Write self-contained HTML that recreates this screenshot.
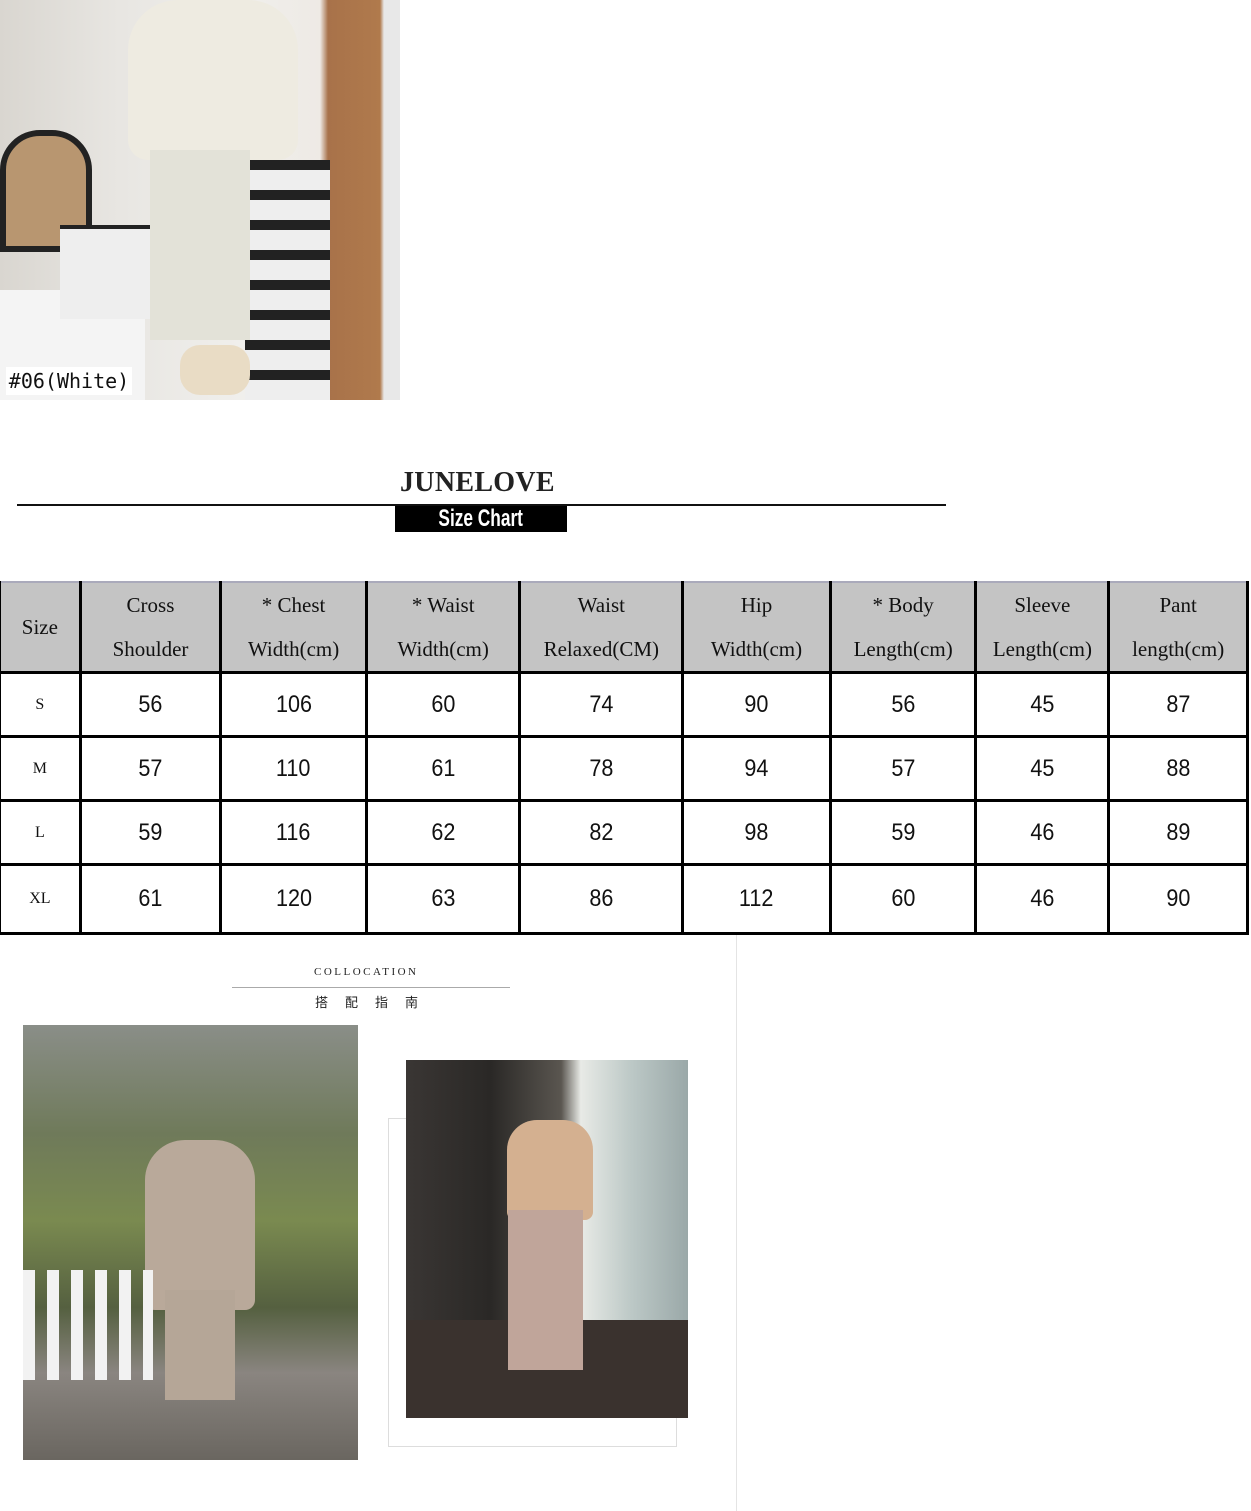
<!DOCTYPE html>
<html><head><meta charset="utf-8"><style>
body{margin:0;width:1251px;height:1511px;background:#fff;position:relative;overflow:hidden;font-family:"Liberation Serif",serif}
.a{position:absolute}
table{border-collapse:collapse;position:absolute;left:-2px;top:581px;table-layout:fixed}
td{border:3px solid #000;text-align:center;padding:0}
tr.h td{background:#c4c4c4;font-size:21px;line-height:44px;color:#111;height:86px;border-top:2px solid #aab}
tr.r td{font-family:"Liberation Sans",sans-serif;font-size:24px;height:61px;color:#111}
tr.r td:first-child{font-family:"Liberation Serif",serif;font-size:16px}
.n{display:inline-block;transform:scaleX(0.9)}
</style></head><body>
<div class="a" style="left:0;top:0;width:400px;height:400px;background:linear-gradient(90deg,#d9d6d0 0,#e8e6e2 30%,#f0efec 60%,#eeeae5 80%,#a8724a 82%,#b07a4c 95%,#e8e8e8 96%)"></div>
<div class="a" style="left:0;top:130px;width:80px;height:110px;background:#b89670;border:6px solid #222;border-radius:40px 40px 0 0"></div>
<div class="a" style="left:0;top:290px;width:145px;height:110px;background:#f4f4f4"></div>
<div class="a" style="left:60px;top:225px;width:110px;height:90px;background:#eee;border-top:4px solid #222"></div>
<div class="a" style="left:245px;top:160px;width:85px;height:240px;background:repeating-linear-gradient(180deg,#222 0 10px,#eee 10px 30px)"></div>
<div class="a" style="left:128px;top:0;width:170px;height:160px;background:#eeebe1;border-radius:50px 50px 20px 20px"></div>
<div class="a" style="left:150px;top:150px;width:100px;height:190px;background:#e3e2d8"></div>
<div class="a" style="left:180px;top:345px;width:70px;height:50px;background:#e9dcc5;border-radius:20px"></div>
<div class="a" style="left:6px;top:367px;width:126px;height:28px;background:#fff;font-family:'DejaVu Sans Mono',monospace;font-size:20px;line-height:28px;text-align:center;color:#111">#06(White)</div>
<div class="a" style="left:400px;top:467px;font-size:28px;font-weight:bold;letter-spacing:0.3px;color:#222">JUNELOVE</div>
<div class="a" style="left:17px;top:504px;width:929px;height:2px;background:#111"></div>
<div class="a" style="left:395px;top:506px;width:172px;height:26px;background:#000;color:#fff;font-family:'Liberation Sans',sans-serif;font-weight:bold;font-size:24px;line-height:26px;text-align:center"><span style="display:inline-block;transform:scaleX(0.72)">Size Chart</span></div>
<table>
<colgroup><col style="width:81px"><col style="width:141px"><col style="width:146px"><col style="width:154px"><col style="width:163px"><col style="width:148px"><col style="width:146px"><col style="width:133px"><col style="width:139px"></colgroup>
<tr class="h"><td>Size</td><td>Cross<br>Shoulder</td><td>* Chest<br>Width(cm)</td><td>* Waist<br>Width(cm)</td><td>Waist<br>Relaxed(CM)</td><td>Hip<br>Width(cm)</td><td>* Body<br>Length(cm)</td><td>Sleeve<br>Length(cm)</td><td>Pant<br>length(cm)</td></tr>
<tr class="r"><td>S</td><td><span class="n">56</span></td><td><span class="n">106</span></td><td><span class="n">60</span></td><td><span class="n">74</span></td><td><span class="n">90</span></td><td><span class="n">56</span></td><td><span class="n">45</span></td><td><span class="n">87</span></td></tr>
<tr class="r"><td>M</td><td><span class="n">57</span></td><td><span class="n">110</span></td><td><span class="n">61</span></td><td><span class="n">78</span></td><td><span class="n">94</span></td><td><span class="n">57</span></td><td><span class="n">45</span></td><td><span class="n">88</span></td></tr>
<tr class="r"><td>L</td><td><span class="n">59</span></td><td><span class="n">116</span></td><td><span class="n">62</span></td><td><span class="n">82</span></td><td><span class="n">98</span></td><td><span class="n">59</span></td><td><span class="n">46</span></td><td><span class="n">89</span></td></tr>
<tr class="r"><td style="height:66px">XL</td><td><span class="n">61</span></td><td><span class="n">120</span></td><td><span class="n">63</span></td><td><span class="n">86</span></td><td><span class="n">112</span></td><td><span class="n">60</span></td><td><span class="n">46</span></td><td><span class="n">90</span></td></tr>
</table>
<div class="a" style="left:736px;top:935px;width:1px;height:576px;background:#e4e4e4"></div>
<div class="a" style="left:314px;top:966px;font-size:11px;letter-spacing:2.5px;color:#222">COLLOCATION</div>
<div class="a" style="left:232px;top:987px;width:278px;height:1px;background:#aaa"></div>
<div class="a" style="left:315px;top:992px;font-family:'Liberation Sans','Noto Sans CJK SC',sans-serif;font-size:13px;letter-spacing:17px;color:#222">搭配指南</div>
<div class="a" style="left:23px;top:1025px;width:335px;height:435px;background:linear-gradient(180deg,#8a8e88 0,#6f7a5a 25%,#7a8a50 45%,#556040 65%,#8a8580 80%,#6a6660 100%)"></div>
<div class="a" style="left:145px;top:1140px;width:110px;height:170px;background:#b9a99a;border-radius:40px 40px 10px 10px"></div>
<div class="a" style="left:165px;top:1290px;width:70px;height:110px;background:#b5a697"></div>
<div class="a" style="left:23px;top:1270px;width:130px;height:110px;background:repeating-linear-gradient(90deg,#f2f2f2 0 12px,transparent 12px 24px)"></div>
<div class="a" style="left:388px;top:1118px;width:287px;height:327px;border:1px solid #ddd"></div>
<div class="a" style="left:406px;top:1060px;width:282px;height:358px;background:linear-gradient(90deg,#3a3634 0,#2a2826 30%,#5a5650 55%,#e8eae6 62%,#bcc8c6 80%,#9aa8a8 100%)"></div>
<div class="a" style="left:406px;top:1320px;width:282px;height:98px;background:#3a322e"></div>
<div class="a" style="left:507px;top:1120px;width:86px;height:100px;background:#d4b090;border-radius:30px 30px 8px 8px"></div>
<div class="a" style="left:508px;top:1210px;width:75px;height:160px;background:#c0a59a"></div>
</body></html>
